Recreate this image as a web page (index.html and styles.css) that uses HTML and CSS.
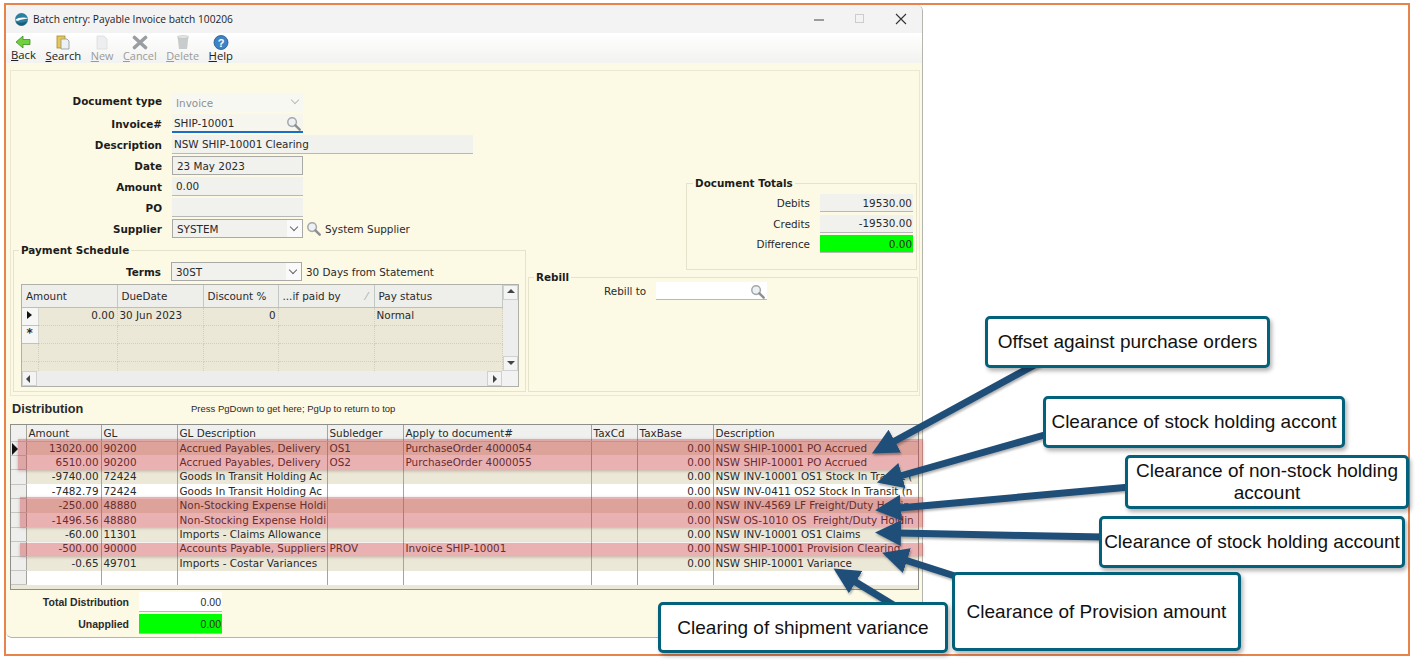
FILE: index.html
```html
<!DOCTYPE html>
<html lang="en">
<head>
    <meta charset="UTF-8">
    <title>Batch entry: Payable Invoice batch 100206</title>
    <link rel="stylesheet" href="styles.css">
</head>
<body>
    <svg class="defs" width="0" height="0">
        <symbol id="lens" viewBox="0 0 16 16">
            <circle cx="6.500" cy="6.500" r="4.600" fill="#eef1f3" stroke="#a3a7aa" stroke-width="1.600"/>
            <path d="M10 10l4.600 4.600" stroke="#8d8f90" stroke-width="2.600" stroke-linecap="round"/>
        </symbol>
    </svg>

    <div class="frame">
        <div class="window">
            <div class="titlebar">
                <svg class="logo" width="15" height="15" viewBox="0 0 15 15">
                    <circle cx="7.500" cy="7.500" r="6.500" fill="#2c7f9e"/>
                    <path d="M1 8c3-3 9-3 13-2-2 1.500-7 1-9 2.500-1.500.5-3 .2-4-.5z" fill="#fff"/>
                    <path d="M2 10c3 1 8 1 11-1-1 3-3 4.500-5.500 4.500S3 12 2 10z" fill="#1d5c78"/>
                </svg>
                <span class="title-text">Batch entry: Payable Invoice batch 100206</span>
                <div class="win-btns">
                    <svg width="12" height="12" viewBox="0 0 12 12"><path d="M1 7h10" stroke="#444" stroke-width="1"/></svg>
                    <svg width="12" height="12" viewBox="0 0 12 12"><rect x="1.500" y="1.500" width="8" height="8" fill="none" stroke="#ccc"/></svg>
                    <svg width="12" height="12" viewBox="0 0 12 12"><path d="M1 1l10 10M11 1L1 11" stroke="#333" stroke-width="1.100"/></svg>
                </div>
            </div>

            <div class="toolbar">
                <div class="tool">
                    <svg width="16" height="14" viewBox="0 0 16 14"><path d="M1 7l7-6v3.500h7v5H8V13z" fill="#6fd13d" stroke="#3d8f1f" stroke-width=".8"/></svg>
                    <span><u>B</u>ack</span>
                </div>
                <div class="tool">
                    <svg width="16" height="15" viewBox="0 0 16 15"><rect x="2" y="1" width="8" height="12" fill="#e6c75a" stroke="#a88c2c" stroke-width=".8"/><path d="M6 4h6l2 2v8H6z" fill="#eef1f4" stroke="#8a949c" stroke-width=".8"/></svg>
                    <span><u>S</u>earch</span>
                </div>
                <div class="tool off">
                    <svg width="14" height="15" viewBox="0 0 14 15"><path d="M2 1h7l3 3v10H2z" fill="#eceeef" stroke="#dadcdd" stroke-width=".8"/></svg>
                    <span><u>N</u>ew</span>
                </div>
                <div class="tool off">
                    <svg width="16" height="15" viewBox="0 0 16 15"><path d="M2.500 2.500l11 10M13.500 2.500l-11 10" stroke="#9a9ea2" stroke-width="3.600" stroke-linecap="round"/></svg>
                    <span><u>C</u>ancel</span>
                </div>
                <div class="tool off">
                    <svg width="14" height="15" viewBox="0 0 14 15"><path d="M1.500 1.500h11l-1.500 12.500H3z" fill="#c9cccc"/><ellipse cx="7" cy="2" rx="5.500" ry="1.400" fill="#e5e7e7" stroke="#b4b7b7" stroke-width=".5"/></svg>
                    <span><u>D</u>elete</span>
                </div>
                <div class="tool">
                    <svg width="16" height="15" viewBox="0 0 16 15"><circle cx="8" cy="7.500" r="7" fill="#3d83c6" stroke="#25598c" stroke-width=".8"/><text x="8" y="11.500" class="help-mark">?</text></svg>
                    <span><u>H</u>elp</span>
                </div>
            </div>

            <div class="content">
                <div class="panel">
                    <div class="left-col">
                        <div class="form-row">
                            <label class="lbl raised">Document type</label>
                            <div class="field disabled short">Invoice<span class="chev light"></span></div>
                        </div>
                        <div class="form-row">
                            <label class="lbl">Invoice#</label>
                            <div class="field active short">SHIP-10001<svg class="lens"><use href="#lens"/></svg></div>
                        </div>
                        <div class="form-row">
                            <label class="lbl">Description</label>
                            <div class="field wide">NSW SHIP-10001 Clearing</div>
                        </div>
                        <div class="form-row">
                            <label class="lbl">Date</label>
                            <div class="field boxed short">23 May 2023</div>
                        </div>
                        <div class="form-row">
                            <label class="lbl">Amount</label>
                            <div class="field short">0.00</div>
                        </div>
                        <div class="form-row">
                            <label class="lbl">PO</label>
                            <div class="field short"></div>
                        </div>
                        <div class="form-row">
                            <label class="lbl">Supplier</label>
                            <div class="field boxed short">SYSTEM<span class="chev"></span></div>
                            <svg class="lens outer"><use href="#lens"/></svg>
                            <span class="note">System Supplier</span>
                        </div>

                        <fieldset class="group pay-group">
                            <legend>Payment Schedule</legend>
                            <div class="form-row terms-row">
                                <label class="lbl">Terms</label>
                                <div class="field boxed terms">30ST<span class="chev"></span></div>
                                <span class="note">30 Days from Statement</span>
                            </div>
                            <div class="pay-grid">
                                <div class="pay-main">
                                    <table class="pay-table">
                                        <colgroup>
                                            <col class="p-sel"><col class="p-amt"><col class="p-due"><col class="p-disc"><col class="p-paid"><col class="p-stat">
                                        </colgroup>
                                        <thead>
                                            <tr><th colspan="2">Amount</th><th>DueDate</th><th>Discount %</th><th>...if paid by<span class="sort">&#8260;</span></th><th>Pay status</th></tr>
                                        </thead>
                                        <tbody>
                                            <tr><td class="sel"><span class="tri"></span></td><td class="num">0.00</td><td>30 Jun 2023</td><td class="num">0</td><td></td><td>Normal</td></tr>
                                            <tr><td class="sel star">*</td><td></td><td></td><td></td><td></td><td></td></tr>
                                            <tr><td class="blank"></td><td></td><td></td><td></td><td></td><td></td></tr>
                                            <tr class="part-row"><td class="blank"></td><td></td><td></td><td></td><td></td><td></td></tr>
                                        </tbody>
                                    </table>
                                    <div class="vscroll"><span class="sb-btn up"></span><span class="sb-btn down"></span></div>
                                </div>
                                <div class="hscroll"><span class="sb-btn left"></span><span class="sb-btn right"></span></div>
                            </div>
                        </fieldset>
                    </div>

                    <div class="right-col">
                        <fieldset class="group totals-group">
                            <legend>Document Totals</legend>
                            <div class="total-row"><label>Debits</label><div class="field total">19530.00</div></div>
                            <div class="total-row"><label>Credits</label><div class="field total">-19530.00</div></div>
                            <div class="total-row"><label>Difference</label><div class="field total green">0.00</div></div>
                        </fieldset>
                        <fieldset class="group rebill-group">
                            <legend>Rebill</legend>
                            <div class="rebill-row">
                                <label>Rebill to</label>
                                <div class="field rebill"><svg class="lens"><use href="#lens"/></svg></div>
                            </div>
                        </fieldset>
                    </div>
                </div>

                <div class="dist-head">
                    <h3>Distribution</h3>
                    <span>Press PgDown to get here; PgUp to return to top</span>
                </div>

                <div class="dist-wrap">
                    <table class="dist-table">
                        <colgroup>
                            <col class="d-sel"><col class="d-amt"><col class="d-gl"><col class="d-gld"><col class="d-sub"><col class="d-app"><col class="d-tax"><col class="d-base"><col class="d-desc">
                        </colgroup>
                        <thead>
                            <tr><th></th><th>Amount</th><th>GL</th><th>GL Description</th><th>Subledger</th><th>Apply to document#</th><th>TaxCd</th><th>TaxBase</th><th>Description</th></tr>
                        </thead>
                        <tbody>
                            <tr><td class="sel"><span class="tri"></span></td><td class="num">13020.00</td><td>90200</td><td>Accrued Payables, Delivery</td><td>OS1</td><td>PurchaseOrder 4000054</td><td></td><td class="num">0.00</td><td>NSW SHIP-10001 PO Accrued</td></tr>
                            <tr><td class="sel"></td><td class="num">6510.00</td><td>90200</td><td>Accrued Payables, Delivery</td><td>OS2</td><td>PurchaseOrder 4000055</td><td></td><td class="num">0.00</td><td>NSW SHIP-10001 PO Accrued</td></tr>
                            <tr><td class="sel"></td><td class="num">-9740.00</td><td>72424</td><td>Goods In Transit Holding Ac</td><td></td><td></td><td></td><td class="num">0.00</td><td>NSW INV-10001 OS1 Stock In Transit (</td></tr>
                            <tr><td class="sel"></td><td class="num">-7482.79</td><td>72424</td><td>Goods In Transit Holding Ac</td><td></td><td></td><td></td><td class="num">0.00</td><td>NSW INV-0411 OS2 Stock In Transit (n</td></tr>
                            <tr><td class="sel"></td><td class="num">-250.00</td><td>48880</td><td>Non-Stocking Expense Holdi</td><td></td><td></td><td></td><td class="num">0.00</td><td>NSW INV-4569 LF Freight/Duty Holdin</td></tr>
                            <tr><td class="sel"></td><td class="num">-1496.56</td><td>48880</td><td>Non-Stocking Expense Holdi</td><td></td><td></td><td></td><td class="num">0.00</td><td>NSW OS-1010 OS&nbsp; Freight/Duty Holdin</td></tr>
                            <tr><td class="sel"></td><td class="num">-60.00</td><td>11301</td><td>Imports - Claims Allowance</td><td></td><td></td><td></td><td class="num">0.00</td><td>NSW INV-10001 OS1 Claims</td></tr>
                            <tr><td class="sel"></td><td class="num">-500.00</td><td>90000</td><td>Accounts Payable, Suppliers</td><td>PROV</td><td>Invoice SHIP-10001</td><td></td><td class="num">0.00</td><td>NSW SHIP-10001 Provision Clearing</td></tr>
                            <tr><td class="sel"></td><td class="num">-0.65</td><td>49701</td><td>Imports - Costar Variances</td><td></td><td></td><td></td><td class="num">0.00</td><td>NSW SHIP-10001 Variance</td></tr>
                            <tr><td class="sel"></td><td></td><td></td><td></td><td></td><td></td><td></td><td></td><td></td></tr>
                        </tbody>
                    </table>
                </div>

                <div class="sum-row">
                    <label>Total Distribution</label>
                    <div class="sum-box">0.00</div>
                </div>
                <div class="sum-row">
                    <label>Unapplied</label>
                    <div class="sum-box sum-green">0.00</div>
                </div>
            </div>
        </div>

        <!-- Annotations drawn over the screenshot -->
        <div class="hl hl-1"></div>
        <div class="hl hl-2"></div>
        <div class="hl hl-3"></div>

        <svg class="arrows" width="1416" height="660" viewBox="0 0 1416 660">
            <defs>
                <marker id="head" markerUnits="userSpaceOnUse" markerWidth="28" markerHeight="28" refX="2" refY="14" orient="auto">
                    <path d="M0 1L26 14 0 27z" fill="#1f4e79"/>
                </marker>
            </defs>
            <line class="arrow" x1="1040" y1="362" x2="893" y2="442" marker-end="url(#head)"/>
            <line class="arrow" x1="1048" y1="434" x2="900" y2="476" marker-end="url(#head)"/>
            <line class="arrow" x1="1130" y1="487" x2="899" y2="508" marker-end="url(#head)"/>
            <line class="arrow" x1="1104" y1="537" x2="899" y2="533" marker-end="url(#head)"/>
            <line class="arrow" x1="958" y1="577" x2="905" y2="560" marker-end="url(#head)"/>
            <line class="arrow" x1="895" y1="606" x2="854" y2="581" marker-end="url(#head)"/>
        </svg>

        <div class="callout c-1">Offset against purchase orders</div>
        <div class="callout c-2">Clearance of stock holding accont</div>
        <div class="callout c-3">Clearance of non-stock holding account</div>
        <div class="callout c-4">Clearance of stock holding account</div>
        <div class="callout c-5">Clearance of Provision amount</div>
        <div class="callout c-6">Clearing of shipment variance</div>
    </div>
</body>
</html>
```

FILE: styles.css
```css
* {
    margin: 0;
    padding: 0;
    box-sizing: border-box;
}

body {
    width: 1416px;
    height: 660px;
    background-color: #fff;
    font-family: 'DejaVu Sans', sans-serif;
    font-size: 10.400px;
    color: #2a2a2a;
    overflow: hidden;
}

.defs {
    position: absolute;
}

/* Orange picture frame. Overlays are placed against the page corner */
.frame {
    width: 1406px;
    height: 653px;
    margin: 3px 0 0 4px;
    border: 2px solid #e9834c;
}

.window {
    width: 917px;
    height: 633px;
    background-color: #fcf9e5;
    border: 1px solid #b5b5b0;
    border-top: none;
    border-left: none;
    border-radius: 6px;
    overflow: hidden;
    display: flex;
    flex-direction: column;
}

.titlebar {
    height: 28px;
    flex: none;
    display: flex;
    align-items: center;
    padding-left: 8px;
    background-color: #f3f3f3;
}

.title-text {
    margin-left: 4px;
    font-family: 'Open Sans', sans-serif;
    font-size: 10.200px;
    color: #222;
}

.win-btns {
    margin-left: auto;
    display: flex;
    gap: 29px;
    padding-right: 15px;
}

.toolbar {
    height: 30px;
    flex: none;
    display: flex;
    gap: 9.500px;
    padding-left: 5px;
    background: linear-gradient(#fff, #f2f2f0);
}

.tool {
    display: flex;
    flex-direction: column;
    align-items: center;
    font-family: 'Open Sans', sans-serif;
    font-size: 11.300px;
    line-height: 12px;
    padding-top: 2px;
    color: #222;
}

.tool svg {
    display: block;
}

.tool.off {
    font-size: 10.900px;
    color: #9a9a9a;
}

.help-mark {
    font-family: 'Liberation Sans', sans-serif;
    font-size: 11px;
    font-weight: bold;
    fill: #fff;
    text-anchor: middle;
}

.content {
    flex: 1;
    padding: 7px 0 0 4px;
}

.panel {
    width: 910px;
    height: 326px;
    border: 1px solid #ebe8d2;
    display: flex;
    padding-top: 21px;
}

.left-col {
    width: 517px;
    flex: none;
}

.form-row {
    height: 21px;
    display: flex;
    align-items: center;
}

.lbl {
    width: 151px;
    margin-right: 10px;
    text-align: right;
    font-weight: bold;
    color: #1c1c1c;
}

.lbl.raised {
    padding-bottom: 4px;
}

.field {
    position: relative;
    height: 19px;
    padding: 0 4px;
    display: flex;
    align-items: center;
    background-color: #f1f1ee;
    border-bottom: 1px solid #b8b8b4;
}

.short {
    width: 131px;
}

.wide {
    width: 301px;
    padding-left: 2px;
}

.disabled {
    background-color: #f8f8f3;
    color: #909090;
    border-bottom: none;
}

.active {
    padding-left: 2px;
    background-color: #f7f6ee;
    border-bottom: 2px solid #1a6fc4;
}

.boxed {
    border: 1px solid #a9a9a5;
}

.terms {
    width: 131px;
}

.chev {
    position: absolute;
    right: 0;
    top: 0;
    bottom: 0;
    width: 15px;
    background-color: #fafafa;
}

.chev::after {
    content: "";
    position: absolute;
    left: 4px;
    top: 4px;
    width: 5px;
    height: 5px;
    border-right: 1px solid #666;
    border-bottom: 1px solid #666;
    transform: rotate(45deg);
}

.chev.light {
    background: none;
}

.chev.light::after {
    border-color: #bbb;
}

svg.lens {
    position: absolute;
    right: 2px;
    top: 2px;
    width: 15px;
    height: 15px;
}

svg.lens.outer {
    position: static;
    margin-left: 3px;
    flex: none;
}

.note {
    margin-left: 4px;
}

.group {
    border: 1px solid #e6e3cd;
}

.group legend {
    font-weight: bold;
    padding: 0 2px;
    margin-left: 5px;
    color: #1c1c1c;
}

.pay-group {
    width: 513px;
    height: 148px;
    margin: 5px 0 0 2px;
}

.terms-row {
    margin: 5px 0 0 -2px;
}

.terms-row .lbl {
    width: 149px;
}

.pay-grid {
    width: 498px;
    margin: 2px 0 0 7px;
    border: 1px solid #b0b0aa;
    background-color: #f2f2f2;
}

.pay-main {
    display: flex;
}

.pay-table {
    width: 480px;
    table-layout: fixed;
    border-collapse: collapse;
    background-color: #ebe8d8;
}

.p-sel { width: 16px; }
.p-amt { width: 79px; }
.p-due { width: 86px; }
.p-disc { width: 75px; }
.p-paid { width: 96px; }
.p-stat { width: 128px; }

.pay-table th {
    height: 22px;
    padding-left: 4px;
    text-align: left;
    font-weight: normal;
    background-color: #eeeeea;
    border-right: 1px solid #c2c8c4;
    border-bottom: 1px solid #b6c0bc;
    position: relative;
}

.sort {
    position: absolute;
    right: 6px;
    color: #aaa;
}

.pay-table td {
    height: 18px;
    padding: 1px 2px 0;
    vertical-align: top;
    border-right: 1px dotted #d2cfbd;
    border-bottom: 1px dotted #d2cfbd;
}

.pay-table .part-row td {
    height: 10px;
    border-bottom: none;
}

td.sel {
    background-color: #f0f0ee;
    border-right: 1px solid #d6d6d0;
    border-bottom: 1px solid #bcc4c0;
    position: relative;
}

.pay-table td.sel {
    padding: 0;
    background-color: #f6f6f4;
}

.pay-table td.blank {
    background-color: #ebe8d8;
}

.star {
    text-align: center;
    font-size: 12px;
    font-weight: bold;
}

.tri {
    position: absolute;
    left: 5px;
    top: 3px;
    border-left: 5px solid #111;
    border-top: 4px solid transparent;
    border-bottom: 4px solid transparent;
}

.num {
    text-align: right;
}

.vscroll {
    width: 16px;
    display: flex;
    flex-direction: column;
    justify-content: space-between;
    background-color: #ededed;
}

.hscroll {
    width: 480px;
    height: 15px;
    display: flex;
    justify-content: space-between;
    background-color: #ededed;
}

.sb-btn {
    width: 15px;
    height: 15px;
    background-color: #f4f4f4;
    border: 1px solid #d0d0d0;
    position: relative;
}

.sb-btn::after {
    content: "";
    position: absolute;
    left: 3px;
    top: 3px;
    border: 4px solid transparent;
}

.up::after { border-bottom-color: #444; top: -1px; }
.down::after { border-top-color: #444; top: 4px; }
.left::after { border-right-color: #444; left: -1px; }
.right::after { border-left-color: #444; left: 5px; }

.right-col {
    flex: 1;
    padding-top: 85px;
}

.totals-group {
    width: 231px;
    height: 93px;
    margin-left: 158px;
    padding-top: 4px;
}

.totals-group legend {
    margin-left: 6px;
}

.total-row {
    display: flex;
    align-items: center;
    justify-content: flex-end;
    gap: 10px;
    height: 20.500px;
    padding-right: 3px;
}

.total {
    width: 93px;
    justify-content: flex-end;
    padding: 0 1px;
    height: 18px;
}

.green {
    background-color: #00ff00;
}

.rebill-group {
    width: 390px;
    height: 121px;
    margin-top: 1px;
}

.rebill-row {
    display: flex;
    align-items: center;
    gap: 10px;
    padding-left: 75px;
    margin-top: -1px;
}

.rebill {
    width: 111px;
    height: 18px;
    background-color: #fff;
}

.dist-head {
    height: 28px;
    padding: 0 0 3px 2px;
    display: flex;
    align-items: center;
    font-family: 'Liberation Sans', sans-serif;
}

.dist-head h3 {
    width: 179px;
    font-size: 12.700px;
}

.dist-head span {
    font-size: 9.500px;
}

.dist-wrap {
    width: 909px;
    height: 166px;
    background-color: #ebe8d8;
    border: 1px solid #8e8e8a;
    overflow: hidden;
}

.dist-table {
    width: 907px;
    table-layout: fixed;
    border-collapse: collapse;
    background-color: #fff;
}

.d-sel { width: 15px; }
.d-amt { width: 75px; }
.d-gl { width: 76px; }
.d-gld { width: 150px; }
.d-sub { width: 76px; }
.d-app { width: 188px; }
.d-tax { width: 46px; }
.d-base { width: 76px; }
.d-desc { width: 205px; }

.dist-table th {
    height: 16px;
    padding-left: 2px;
    text-align: left;
    font-weight: normal;
    background-color: #f0f0ee;
    border-right: 1px solid #a5a5a0;
    border-bottom: 1px solid #c8c8c4;
}

.dist-table td {
    height: 14.400px;
    line-height: 13px;
    padding: 0 2px;
    white-space: nowrap;
    overflow: hidden;
    border-right: 1px solid #a5a5a0;
}

.dist-table tbody tr:nth-child(odd) td {
    background-color: #ebe8d8;
}

.dist-table td.sel,
.dist-table tbody tr:nth-child(odd) td.sel {
    background-color: #eeeeec;
    border-bottom: 1px solid #c4c4c0;
}

.dist-table .tri {
    left: 1px;
    top: 1px;
    border-left-width: 6px;
    border-top-width: 6px;
    border-bottom-width: 6px;
}

.sum-row {
    display: flex;
    align-items: center;
    height: 22px;
    font-family: 'Liberation Sans', sans-serif;
    font-size: 10.500px;
    font-weight: bold;
}

.dist-wrap + .sum-row {
    margin-top: 1px;
}

.sum-row label {
    width: 119px;
    margin-right: 10px;
    text-align: right;
}

.sum-box {
    width: 83px;
    height: 20px;
    padding: 0 1px;
    display: flex;
    align-items: center;
    justify-content: flex-end;
    font-weight: normal;
    background-color: #fff;
    border-bottom: 1px solid #b8b8b4;
}

.sum-green {
    background-color: #00ff00;
}

/* Pink highlight bands */
.hl {
    position: absolute;
    left: 20px;
    width: 903px;
    background-color: rgba(200, 50, 55, 0.38);
    box-shadow: 0 1px 3px rgba(120, 60, 60, 0.35);
}

.hl-1 { top: 439px; height: 31px; left: 18px; width: 905px; }
.hl-2 { top: 497px; height: 30px; }
.hl-3 { top: 543px; height: 13px; }

.arrows {
    position: absolute;
    left: 0;
    top: 0;
    filter: drop-shadow(1px 2px 1px rgba(0, 0, 0, 0.3));
}

.arrow {
    stroke: #1f4e79;
    stroke-width: 7;
}

.callout {
    position: absolute;
    display: flex;
    align-items: center;
    justify-content: center;
    text-align: center;
    background-color: #fff;
    border: 3.500px solid #04617b;
    border-radius: 5px;
    box-shadow: 2px 3px 4px rgba(0, 0, 0, 0.3);
    font-family: 'Liberation Sans', sans-serif;
    font-size: 19px;
    line-height: 22px;
    color: #111;
}

.c-1 { left: 985px; top: 316px; width: 285px; height: 52px; }
.c-2 { left: 1043px; top: 396px; width: 302px; height: 52px; }
.c-3 { left: 1125px; top: 455px; width: 284px; height: 54px; }
.c-4 { left: 1099px; top: 516px; width: 306px; height: 52px; white-space: nowrap; }
.c-5 { left: 952px; top: 572px; width: 289px; height: 79px; }
.c-6 { left: 658px; top: 602px; width: 290px; height: 51px; }
```
